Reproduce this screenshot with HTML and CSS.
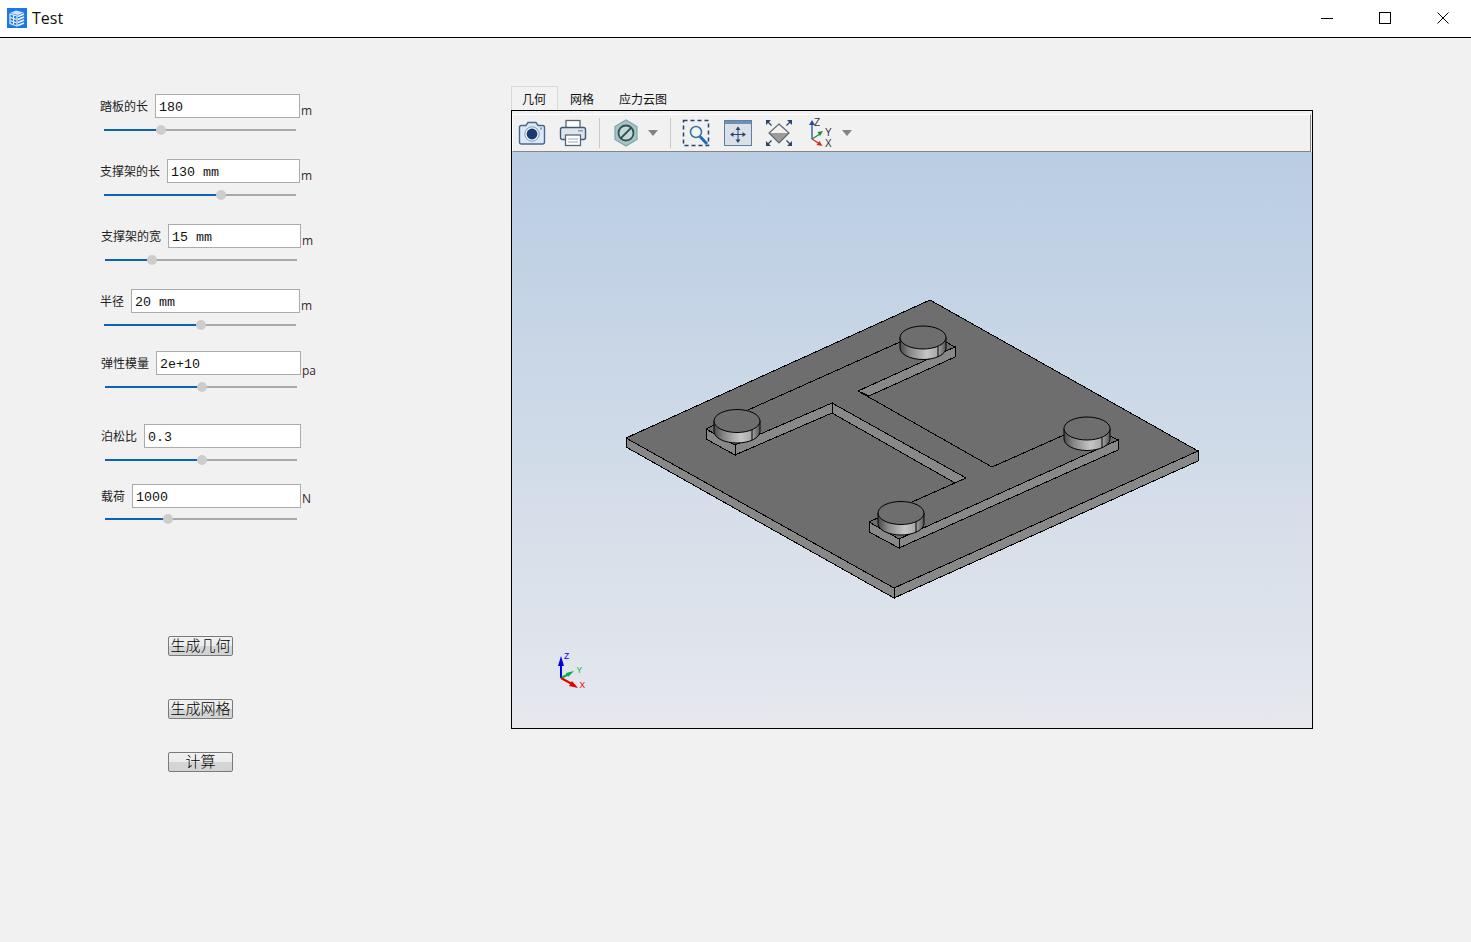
FILE: index.html
```html
<!DOCTYPE html>
<html lang="zh-CN">
<head>
<meta charset="utf-8">
<title>Test</title>
<link rel="stylesheet" href="styles.css">
</head>
<body>
<header class="titlebar">
  <svg class="logo" width="20" height="20" viewBox="0 0 20 20">
    <rect width="20" height="20" fill="#1b78e6"/>
    <path d="M3 5 L9 2.5 L17 4.5 L11 7Z" fill="#cfe3fb"/>
    <path d="M3 6 L10 8 V18 L3 15.5Z" fill="#1b78e6" stroke="#e8f2fe" stroke-width="1.2"/>
    <path d="M3.5 9.5 L9.5 11.5 M3.5 12.7 L9.5 14.7 M6.5 7 V16" stroke="#e8f2fe" stroke-width="1.2"/>
    <path d="M11 8.5 L17 6 M11 11.5 L17 9 M11 14.5 L17 12 M11 17.5 L17 15" stroke="#f4f9ff" stroke-width="1.6"/>
  </svg>
  <span class="title">Test</span>
  <div class="winctl">
    <svg width="12" height="12" viewBox="0 0 12 12"><path d="M0 6.5H12" stroke="#000" stroke-width="1"/></svg>
    <svg width="12" height="12" viewBox="0 0 12 12"><rect x=".5" y=".5" width="11" height="11" fill="none" stroke="#000"/></svg>
    <svg width="12" height="12" viewBox="0 0 12 12"><path d="M.5 .5L11.5 11.5M11.5 .5L.5 11.5" stroke="#000" stroke-width="1"/></svg>
  </div>
</header>

<main class="content">
  <section class="side">
    <div class="form">
      <div class="field gap-24">
        <div class="row"><label class="lbl">踏板的长</label><div class="input">180</div><span class="unit">m</span></div>
        <div class="slider"><i class="fill" style="width:57px"></i><i class="thumb"></i><i class="rest"></i></div>
      </div>
      <div class="field gap-24">
        <div class="row"><label class="lbl">支撑架的长</label><div class="input">130 mm</div><span class="unit">m</span></div>
        <div class="slider"><i class="fill" style="width:117px"></i><i class="thumb"></i><i class="rest"></i></div>
      </div>
      <div class="field shift gap-24">
        <div class="row"><label class="lbl">支撑架的宽</label><div class="input">15 mm</div><span class="unit">m</span></div>
        <div class="slider"><i class="fill" style="width:47px"></i><i class="thumb"></i><i class="rest"></i></div>
      </div>
      <div class="field gap-21">
        <div class="row"><label class="lbl">半径</label><div class="input">20 mm</div><span class="unit">m</span></div>
        <div class="slider"><i class="fill" style="width:97px"></i><i class="thumb"></i><i class="rest"></i></div>
      </div>
      <div class="field shift gap-32">
        <div class="row"><label class="lbl">弹性模量</label><div class="input">2e+10</div><span class="unit unit-pa">pa</span></div>
        <div class="slider"><i class="fill" style="width:97px"></i><i class="thumb"></i><i class="rest"></i></div>
      </div>
      <div class="field shift gap-19">
        <div class="row"><label class="lbl">泊松比</label><div class="input">0.3</div><span class="unit"></span></div>
        <div class="slider"><i class="fill" style="width:97px"></i><i class="thumb"></i><i class="rest"></i></div>
      </div>
      <div class="field shift">
        <div class="row"><label class="lbl">载荷</label><div class="input">1000</div><span class="unit unit-n">N</span></div>
        <div class="slider tight"><i class="fill" style="width:63px"></i><i class="thumb"></i><i class="rest"></i></div>
      </div>
    </div>
    <div class="actions">
      <button class="btn">生成几何</button>
      <button class="btn b2">生成网格</button>
      <button class="btn b3">计算</button>
    </div>
  </section>

  <section class="view">
    <nav class="tabs">
      <span class="tab active">几何</span>
      <span class="tab t2">网格</span>
      <span class="tab">应力云图</span>
    </nav>
    <div class="frame">
      <div class="toolbar">
        <svg class="ic" width="28" height="28" viewBox="0 0 28 28">
          <path d="M1.5 8.5Q1.5 6.5 3.5 6.5H8L10 3.5H18L20 6.5H24.5Q26.5 6.5 26.5 8.5V23Q26.5 25 24.5 25H3.500Q1.500 25 1.500 23Z" fill="#dde8f4" stroke="#47698f" stroke-width="1.400"/>
          <circle cx="14" cy="15" r="7.200" fill="#eef4fa" stroke="#7f9cbc"/>
          <circle cx="14" cy="15" r="5.400" fill="#1c3a72"/>
          <rect x="22" y="8.500" width="2" height="2" fill="#7b96b5"/>
        </svg>
        <svg class="ic g13" width="28" height="28" viewBox="0 0 28 28">
          <rect x="7" y="1.500" width="14" height="8" fill="#fff" stroke="#56677a" stroke-width="1.300"/>
          <rect x="1.500" y="8.500" width="25" height="12" rx="2" fill="#dfe5ec" stroke="#3f5a78" stroke-width="1.400"/>
          <rect x="19" y="11" width="5" height="1.500" fill="#8d9db0"/>
          <rect x="6.500" y="16" width="15" height="10.500" fill="#fff" stroke="#56677a" stroke-width="1.300"/>
          <path d="M9 20H19M9 23H19" stroke="#9aa7b5"/>
        </svg>
        <span class="sep s12"></span>
        <svg class="ic g12" width="28" height="28" viewBox="0 0 28 28">
          <path d="M14 1L25 7.500V20.500L14 27L3 20.500V7.500Z" fill="#a8c4c5" stroke="#7fa4a6" stroke-width="1.200"/>
          <circle cx="14" cy="14" r="7.500" fill="#c5d8d8" stroke="#2e5152" stroke-width="1.800"/>
          <path d="M9 19L19 9" stroke="#2e5152" stroke-width="1.800"/>
        </svg>
        <svg class="tri g7" width="12" height="6" viewBox="0 0 12 6"><path d="M1 0H11L6 6Z" fill="#7f8589"/></svg>
        <span class="sep"></span>
        <svg class="ic g11" width="28" height="28" viewBox="0 0 28 28">
          <rect x="1.500" y="1.500" width="25" height="25" fill="none" stroke="#24436e" stroke-width="1.500" stroke-dasharray="4 3"/>
          <circle cx="14" cy="13" r="5.500" fill="#eef5fb" stroke="#3b6f9f" stroke-width="1.500"/>
          <path d="M18 17.500L25 25" stroke="#1d6db5" stroke-width="3"/>
        </svg>
        <svg class="ic g14" width="28" height="28" viewBox="0 0 28 28">
          <rect x=".500" y="1.500" width="27" height="25" fill="#dbe0e8" stroke="#5e7ea3"/>
          <rect x="1" y="2" width="26" height="3" fill="#6f8fb3"/>
          <path d="M14 8.500V23M7.500 15.500H20.500" stroke="#28466f" stroke-width="1"/>
          <path d="M14 7.500L11.500 11H16.500ZM14 24L11.500 20.500H16.500ZM6 15.500L9.500 13V18ZM22 15.500L18.500 13V18Z" fill="#28466f"/>
        </svg>
        <svg class="ic g13" width="28" height="28" viewBox="0 0 28 28">
          <path d="M14 5L24 14H4Z" fill="#f2f2f2"/>
          <path d="M4 14H24L14 24Z" fill="#9c9c9c"/>
          <path d="M14 5L24 14L14 24L4 14Z" fill="none" stroke="#5d6670" stroke-width="1.200"/>
          <path d="M1 1H6L1 6ZM27 1H22L27 6ZM1 27H6L1 22ZM27 27H22L27 22Z" fill="#27476f"/>
          <path d="M2 2L6.500 6.500M26 2L21.500 6.500M2 26L6.500 21.500M26 26L21.500 21.500" stroke="#27476f" stroke-width="1.300"/>
        </svg>
        <svg class="ic g14 ax" width="28" height="28" viewBox="0 0 28 28">
          <path d="M5 20V5" stroke="#1f4fa6" stroke-width="1.300"/>
          <path d="M5 1L2 6H8Z" fill="#1f4fa6"/>
          <path d="M5 20L13 15" stroke="#1e8a3c" stroke-width="1.300"/>
          <path d="M16 12L10.500 13L13 17Z" fill="#1e8a3c"/>
          <path d="M5 20L12 24.500" stroke="#d62a2a" stroke-width="1.300"/>
          <path d="M15.500 27L9.500 26L12.500 22Z" fill="#d62a2a"/>
          <text class="axlabel" x="7" y="7">Z</text>
          <text class="axlabel" x="18" y="17">Y</text>
          <text class="axlabel" x="18" y="28">X</text>
        </svg>
        <svg class="tri g6" width="12" height="6" viewBox="0 0 12 6"><path d="M1 0H11L6 6Z" fill="#7f8589"/></svg>
      </div>
      <div class="viewport">
        <svg class="scene" width="800" height="576" viewBox="512 152 800 576">
          <defs>
            <linearGradient id="cyl" x1="0" x2="1" y1="0" y2="0">
              <stop offset="0" stop-color="#4a4a4a"/>
              <stop offset=".2" stop-color="#858585"/>
              <stop offset=".58" stop-color="#c6c6c6"/>
              <stop offset=".82" stop-color="#a8a8a8"/>
              <stop offset="1" stop-color="#555"/>
            </linearGradient>
            <g id="pin">
              <path d="M-23 0V10.500A23 11.500 0 0 0 23 10.500V0Z" fill="url(#cyl)" stroke="#000"/>
              <path d="M15 8.700V19.200" stroke="#000"/>
              <ellipse rx="23" ry="11.500" fill="#6e6e6e" stroke="#000"/>
            </g>
          </defs>
          <g class="model" stroke="#000" stroke-width="1" shape-rendering="crispEdges">
            <path class="top" d="M930 300L1198 451L894 588L626 438Z"/>
            <path class="side" d="M626 438L894 588V598L626 447Z"/>
            <path class="side" d="M894 588L1198 451V461L894 598Z"/>

            <path class="side" d="M706 429L735 445V455L706 439Z"/>
            <path class="side" d="M735 445L832 403V413L735 455Z"/>
            <path class="side" d="M832 403L966 478L955 483L832 413Z"/>
            <path class="side" d="M858 391L955 347V357L869 396Z"/>
            <path class="side" d="M869 522L899 539V548L869 532Z"/>
            <path class="side" d="M899 539L1118 440V450L899 548Z"/>
            <path class="line" d="M706 429L725 420M748 410L900 342M966 478L912 502M858 391L992 467L1064 435M955 347L944 341M869 522L880 517M1118 440L1108 435"/>
          </g>
          <g class="pins">
            <use href="#pin" x="737" y="421"/>
            <use href="#pin" x="923" y="337.500"/>
            <use href="#pin" x="1087" y="428.500"/>
            <use href="#pin" x="901" y="513"/>
          </g>
          <g class="triad">
            <path d="M561 678V661" stroke="#0000e6" stroke-width="2"/>
            <path d="M561 656L558 666H564Z" fill="#0000e6"/>
            <path d="M561 678L569 674" stroke="#00b050" stroke-width="2"/>
            <path d="M574 671L566 673L568 677Z" fill="#00b050"/>
            <path d="M561 678L572 684" stroke="#e60000" stroke-width="2"/>
            <path d="M578 688L569 686L572 681Z" fill="#e60000"/>
            <text class="tz" x="564" y="659">Z</text>
            <text class="ty" x="576.500" y="673">Y</text>
            <text class="tx" x="579.500" y="688">X</text>
          </g>
        </svg>
      </div>
    </div>
  </section>
</main>
</body>
</html>
```
FILE: styles.css
```css
* { box-sizing: border-box; }
html, body { margin: 0; padding: 0; }
body {
  width: 1471px;
  height: 942px;
  overflow: hidden;
  background: #f1f1f1;
  font-family: "Noto Sans CJK SC", "Noto Sans", sans-serif;
  font-size: 12px;
  color: #222;
}

/* title bar */
.titlebar {
  display: flex;
  align-items: center;
  height: 38px;
  padding-left: 7px;
  background: #fff;
  border-bottom: 1px solid #000;
}
.logo { display: block; margin-top: -1px; }
.title {
  margin-left: 5px;
  font-family: "Open Sans", "Noto Sans", sans-serif;
  font-size: 16px;
  color: #111;
  margin-top: -2px;
}
.winctl {
  margin-left: auto;
  margin-right: 22px;
  display: flex;
  gap: 46px;
  margin-top: -2px;
}
.winctl svg { display: block; }

/* layout */
.content { display: flex; }
.side { width: 411px; margin-left: 100px; padding-top: 56px; }
.view { padding-top: 48px; }

/* form */
.field { width: 220px; }
.field.shift { margin-left: 1px; }
.gap-24 { margin-bottom: 24px; }
.gap-21 { margin-bottom: 21px; }
.gap-32 { margin-bottom: 32px; }
.gap-19 { margin-bottom: 19px; }

.row { display: flex; height: 24px; }
.lbl { margin-right: 7px; line-height: 24px; white-space: nowrap; color: #222; }
.input {
  flex: 1;
  height: 24px;
  border: 1px solid #ababab;
  background: #fff;
  padding: 1px 0 0 3px;
  font-family: "Liberation Mono", "DejaVu Sans Mono", monospace;
  font-size: 13.340px;
  line-height: 23px;
  color: #111;
  white-space: pre;
}
.unit {
  width: 20px;
  padding-left: 1px;
  font-family: "Open Sans", "Noto Sans", sans-serif;
  font-size: 12px;
  line-height: 14px;
  color: #3c1f2c;
  align-self: flex-end;
}
.unit-pa { margin-bottom: -3px; }
.unit-n { margin-bottom: 2px; }

.slider {
  display: flex;
  align-items: center;
  width: 192px;
  height: 10px;
  margin: 7px 0 0 4px;
}
.slider.tight { margin-top: 6px; }
.slider i { display: block; }
.fill { height: 2px; background: #0b63b5; flex: none; }
.rest { height: 2px; background: #a9a9a9; flex: 1; }
.thumb {
  flex: none;
  width: 10px;
  height: 10px;
  margin: 0 -5px;
  border-radius: 50%;
  background: #cdcdcd;
  position: relative;
}

/* buttons */
.actions {
  display: flex;
  flex-direction: column;
  align-items: flex-start;
  margin: 112px 0 0 68px;
}
.btn {
  width: 65px;
  height: 20px;
  padding: 0 0 2px;
  border: 1px solid #7a7a7a;
  border-radius: 2px;
  background: linear-gradient(#f0f0f0 0, #ececec 50%, #d6d6d6 50%, #d2d2d2 100%);
  font-family: "Noto Sans CJK SC", sans-serif;
  font-size: 15px;
  font-weight: 300;
  line-height: 16px;
  color: #000;
  white-space: nowrap;
}
.b2 { margin-top: 43px; }
.b3 { margin-top: 33px; }

/* tabs */
.tabs { display: flex; height: 24px; }
.tab {
  padding: 4px 12px 0 12px;
  line-height: 18px;
  font-size: 12px;
  color: #111;
}
.tab.t2 { padding-right: 13px; }
.tab.active {
  padding-left: 10px;
  padding-right: 11px;
  border: 1px solid #d9d9d9;
  border-bottom: 0;
  background: #f2f2f2;
  padding-top: 3px;
}

/* frame */
.frame {
  display: flex;
  flex-direction: column;
  width: 802px;
  height: 619px;
  border: 1px solid #000;
  background: #f1f1f1;
}
.toolbar {
  display: flex;
  align-items: center;
  flex: none;
  height: 38px;
  margin: 3px 1px 0 0;
  padding-left: 5px;
  background: #f1f1f1;
  border-top: 1px solid #fff;
  border-left: 1px solid #fff;
  border-bottom: 1px solid #858585;
  border-right: 1px solid #858585;
}
.ic { display: block; flex: none; overflow: visible; }
.tri { display: block; flex: none; }
.g14 { margin-left: 14px; }
.g13 { margin-left: 13px; }
.g12 { margin-left: 12px; }
.g11 { margin-left: 11px; }
.g7 { margin-left: 7px; }
.g6 { margin-left: 6px; }
.sep { width: 1px; height: 30px; background: #c9c9c9; margin-left: 11px; flex: none; }
.sep.s12 { margin-left: 12px; }
.axlabel { font-family: "Liberation Sans", sans-serif; font-size: 10px; fill: #333; }

.viewport {
  flex: 1;
  min-height: 0;
  background: linear-gradient(#b9cde3, #e6e8ed);
  overflow: hidden;
}
.scene { display: block; }
.top { fill: #6e6e6e; }
.side { fill: #888; }
.side, .top { stroke: #000; }
.line { fill: none; }
.tz, .ty, .tx { font-family: "Liberation Sans", sans-serif; font-size: 8.500px; }
.tz { fill: #0000f0; }
.ty { fill: #00c040; }
.tx { fill: #f00000; }
```
